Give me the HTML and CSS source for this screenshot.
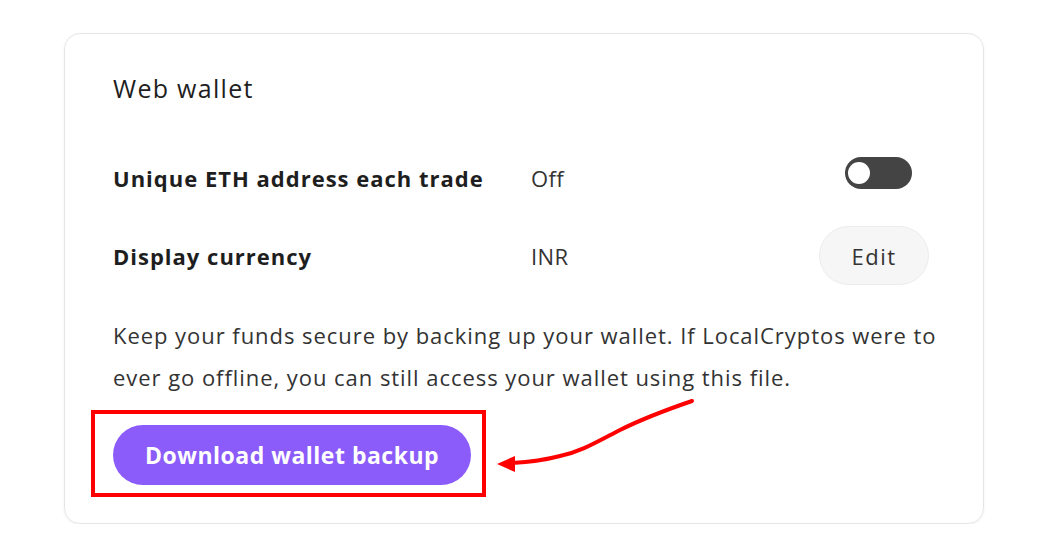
FILE: index.html
```html
<!DOCTYPE html>
<html lang="en">
<head>
    <meta charset="UTF-8">
    <meta name="viewport" content="width=device-width, initial-scale=1.0">
    <title>Web wallet</title>
    <link rel="stylesheet" href="styles.css">
</head>

<body>

    <!-- Wallet settings card -->
    <div class="card">
        <h2 class="card-title">Web wallet</h2>

        <div class="setting-row">
            <span class="setting-label">Unique ETH address each trade</span>
            <span class="setting-value">Off</span>
            <span class="setting-action">
                <span class="toggle"><span class="knob"></span></span>
            </span>
        </div>

        <div class="setting-row">
            <span class="setting-label">Display currency</span>
            <span class="setting-value">INR</span>
            <span class="setting-action">
                <button class="edit-btn">Edit</button>
            </span>
        </div>

        <p class="backup-text">Keep your funds secure by backing up your wallet. If LocalCryptos were to ever go offline, you can still access your wallet using this file.</p>

        <div class="backup-wrap">
            <button class="backup-btn">Download wallet backup</button>
            <span class="highlight-box"></span>
        </div>
    </div>

    <!-- Annotation arrow -->
    <svg class="arrow" width="1053" height="549" viewBox="0 0 1053 549">
        <path d="M692 401 C660 412 640 420 620 430 C595 443 580 452 560 456 C545 460 530 462 512 463" fill="none" stroke="#ff0000" stroke-width="4" stroke-linecap="round"/>
        <polygon points="497,464 515,456 515,472" fill="#ff0000"/>
    </svg>

</body>
</html>
```

FILE: styles.css
```css
body {
    font-family: "Open Sans", "Noto Sans", Arial, sans-serif;
    margin: 0;
    background-color: #fff;
    color: #222;
    overflow: hidden;
}

/* Card */
.card {
    width: 920px;
    box-sizing: border-box;
    margin: 33px 0 0 64px;
    padding: 38px 30px 38px 48px;
    border: 1px solid #e6e6e6;
    border-radius: 16px;
    box-shadow: 0 1px 3px rgba(0, 0, 0, 0.06);
}

.card-title {
    margin: 0 0 60px 0;
    font-size: 25px;
    line-height: 32px;
    font-weight: 400;
    letter-spacing: 1.3px;
    color: #1e1e1e;
}

/* Setting rows */
.setting-row {
    display: grid;
    grid-template-columns: 418px 1fr 160px;
    align-items: center;
    font-size: 22px;
    line-height: 28px;
    margin-bottom: 34px;
}

.setting-row + .setting-row {
    margin-bottom: 29px;
}

.setting-label {
    font-weight: 700;
    letter-spacing: 1px;
    color: #1e1e1e;
}

.setting-value {
    color: #333;
    letter-spacing: 0.4px;
}

.setting-action {
    display: flex;
    justify-content: flex-end;
    padding-right: 24px;
}

.toggle {
    flex-shrink: 0;
    width: 67px;
    height: 32px;
    margin: -11px 17px 0 0;
    border-radius: 16px;
    background-color: #444;
    display: flex;
    align-items: center;
    padding-left: 3px;
    box-sizing: border-box;
}

.knob {
    width: 22px;
    height: 22px;
    border-radius: 50%;
    background-color: #fff;
}

.edit-btn {
    flex-shrink: 0;
    width: 110px;
    height: 59px;
    padding: 0;
    border: 1px solid #ececec;
    border-radius: 30px;
    background-color: #f6f6f6;
    color: #333;
    font-family: inherit;
    font-size: 22px;
    font-weight: 500;
    letter-spacing: 1.5px;
    cursor: pointer;
}

/* Backup section */
.backup-text {
    margin: 0 0 27px 0;
    font-size: 22px;
    line-height: 42px;
    letter-spacing: 0.95px;
    color: #333;
}

.backup-wrap {
    position: relative;
}

.backup-btn {
    height: 60px;
    padding: 0 32px;
    border: none;
    border-radius: 30px;
    background-color: #8b5cfa;
    color: #fff;
    font-family: inherit;
    font-size: 23px;
    font-weight: 700;
    letter-spacing: 0.5px;
    cursor: pointer;
    display: block;
}

.highlight-box {
    position: absolute;
    left: -22px;
    top: -15px;
    width: 395px;
    height: 87px;
    box-sizing: border-box;
    border: 4px solid #ff0000;
}

.arrow {
    position: absolute;
    left: 0;
    top: 0;
    pointer-events: none;
}
```
